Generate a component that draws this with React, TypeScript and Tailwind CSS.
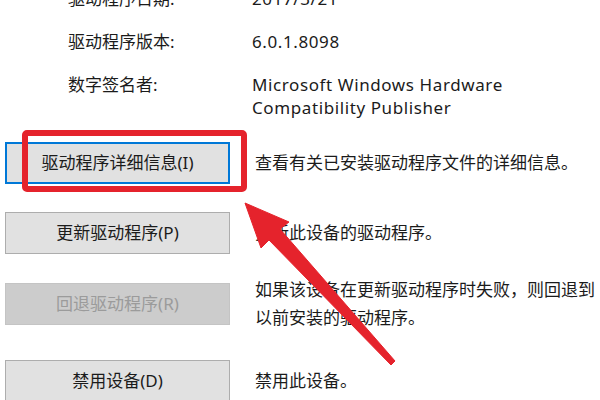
import React from "react";

const font = { fontFamily: '"Noto Sans", "Noto Sans CJK SC", sans-serif' };

function InfoRow({ label, lines }: { label: string; lines: string[] }) {
  return (
    <div className="flex text-[17px] leading-[23px] text-[#1b1b1b]">
      <div className="w-[252px] shrink-0 pl-[68px] whitespace-nowrap">{label}</div>
      <div className="flex flex-col whitespace-nowrap tracking-[0.6px]">
        {lines.map((l) => (
          <span key={l}>{l}</span>
        ))}
      </div>
    </div>
  );
}

function BtnRow({
  label,
  desc,
  variant,
  className,
}: {
  label: string;
  desc: string[];
  variant: "focus" | "normal" | "disabled";
  className: string;
}) {
  const btn =
    variant === "focus"
      ? "border-2 border-[#0078d7] bg-[#e1e1e1] text-[#1b1b1b]"
      : variant === "disabled"
      ? "border border-[#c4c4c4] bg-[#cccccc] text-[#9b9b9b]"
      : "border border-[#adadad] bg-[#e1e1e1] text-[#1b1b1b]";
  return (
    <div className={"flex items-center " + className}>
      <div
        className={
          "ml-[5px] flex h-[42px] w-[225px] shrink-0 items-center justify-center text-[17px] " +
          btn
        }
      >
        {label}
      </div>
      <div className="ml-[25px] flex flex-col whitespace-nowrap text-[17px] leading-[28px] text-[#1b1b1b]">
        {desc.map((d) => (
          <span key={d}>{d}</span>
        ))}
      </div>
    </div>
  );
}

export default function App() {
  return (
    <div className="relative h-[400px] w-[600px] overflow-hidden bg-white" style={font}>
      <div className="mt-[-13px] flex flex-col gap-[20px]">
        <InfoRow label="驱动程序日期:" lines={["2017/3/21"]} />
        <InfoRow label="驱动程序版本:" lines={["6.0.1.8098"]} />
        <InfoRow
          label="数字签名者:"
          lines={["Microsoft Windows Hardware", "Compatibility Publisher"]}
        />
      </div>
      <div className="flex flex-col">
        <BtnRow
          className="mt-[23px]"
          variant="focus"
          label="驱动程序详细信息(I)"
          desc={["查看有关已安装驱动程序文件的详细信息。"]}
        />
        <BtnRow
          className="mt-[28px]"
          variant="normal"
          label="更新驱动程序(P)"
          desc={["更新此设备的驱动程序。"]}
        />
        <BtnRow
          className="mt-[22px]"
          variant="disabled"
          label="回退驱动程序(R)"
          desc={["如果该设备在更新驱动程序时失败，则回退到", "以前安装的驱动程序。"]}
        />
        <BtnRow
          className="mt-[28px]"
          variant="normal"
          label="禁用设备(D)"
          desc={["禁用此设备。"]}
        />
      </div>

      {/* red highlight box */}
      <div className="absolute left-[22px] top-[130px] h-[62px] w-[225px] rounded-[5px] border-[6px] border-[#e5232c]" />

      {/* red arrow */}
      <svg className="absolute left-0 top-0" width="600" height="400" viewBox="0 0 600 400">
        <polygon
          points="245,203 289,222 280,229 395,361 391,365 269,240 261,248"
          fill="#e5232c"
          strokeLinejoin="round"
          stroke="#e5232c"
          strokeWidth="1"
        />
      </svg>
    </div>
  );
}
